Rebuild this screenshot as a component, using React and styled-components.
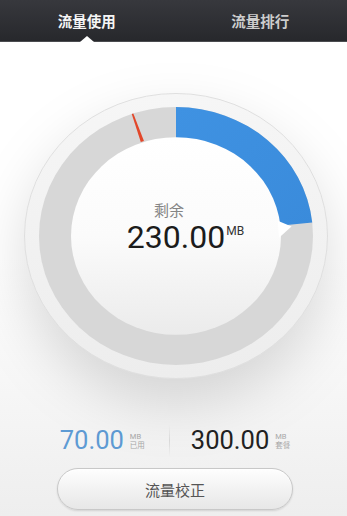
import React from "react";
import styled, { createGlobalStyle } from "styled-components";

const GlobalStyle = createGlobalStyle`
  html, body {
    margin: 0;
    padding: 0;
  }
  body {
    width: 347px;
    height: 516px;
    overflow: hidden;
    font-family: Roboto, "Noto Sans CJK SC", sans-serif;
  }
`;

const Screen = styled.div`
  width: 347px;
  height: 516px;
  display: flex;
  flex-direction: column;
  align-items: center;
  background: linear-gradient(#ffffff 0%, #ffffff 50%, #eeeeee 100%);
  overflow: hidden;
`;

const TabBar = styled.div`
  width: 100%;
  height: 42px;
  flex-shrink: 0;
  display: flex;
  box-sizing: border-box;
  background: linear-gradient(#37383d, #27282c);
  border-bottom: 1px solid #4b4c50;
`;

const Tab = styled.div`
  flex: 1;
  position: relative;
  display: flex;
  align-items: center;
  justify-content: center;
  font-family: "Noto Sans CJK SC", sans-serif;
  font-size: 14.5px;
  font-weight: 700;
  color: ${(props) => (props.$active ? "#f5f5f5" : "#cdcdcd")};

  &::after {
    content: "";
    display: ${(props) => (props.$active ? "block" : "none")};
    position: absolute;
    left: 50%;
    bottom: -1px;
    margin-left: -7px;
    width: 0;
    height: 0;
    border-left: 7px solid transparent;
    border-right: 7px solid transparent;
    border-bottom: 6px solid #ffffff;
  }
`;

const Gauge = styled.div`
  margin-top: 51px;
  margin-left: 5px;
  width: 304px;
  height: 286px;
  flex-shrink: 0;
  display: grid;

  & > * {
    grid-area: 1 / 1;
  }
`;

const Dial = styled.svg`
  width: 304px;
  height: 286px;
  filter: drop-shadow(0 24px 28px rgba(0, 0, 0, 0.14));
`;

const Readout = styled.div`
  position: relative;
  z-index: 1;
  display: flex;
  flex-direction: column;
  align-items: center;
  padding-top: 108px;
`;

const Caption = styled.div`
  margin-left: -14px;
  font-family: "Noto Sans CJK SC", sans-serif;
  font-size: 15px;
  line-height: 18px;
  color: #858585;
`;

const Amount = styled.div`
  position: relative;
  margin-top: 3px;
  font-family: Roboto, sans-serif;
  font-size: 32px;
  line-height: 30px;
  color: #1c1c1c;
`;

const Unit = styled.span`
  position: absolute;
  left: 100%;
  top: 3px;
  margin-left: 1px;
  font-size: 12px;
  line-height: 12px;
  color: #333333;
`;

const Stats = styled.div`
  margin-top: 44px;
  margin-left: 3px;
  height: 36px;
  flex-shrink: 0;
  display: flex;
  align-items: center;
`;

const Stat = styled.div`
  display: flex;
  align-items: center;
  gap: 6px;
`;

const StatValue = styled.span`
  font-family: Roboto, sans-serif;
  font-size: 25.5px;
  line-height: 1;
  color: ${(props) => props.$tone};
`;

const StatLabel = styled.span`
  display: flex;
  flex-direction: column;
  font-family: Roboto, "Noto Sans CJK SC", sans-serif;
  font-size: 7.5px;
  line-height: 9px;
  color: #a8a8a8;
`;

const Divider = styled.div`
  width: 1px;
  height: 32px;
  margin: 0 21px 0 24px;
  background: linear-gradient(rgba(220, 220, 220, 0), #dadada, rgba(220, 220, 220, 0));
`;

const Calibrate = styled.button`
  margin-top: 9px;
  margin-left: 3px;
  width: 236px;
  height: 42px;
  flex-shrink: 0;
  border-radius: 21px;
  border: 1px solid #c8c8c8;
  background: linear-gradient(#fefefe, #e7e7e7);
  box-shadow: 0 1px 2px rgba(0, 0, 0, 0.12), inset 0 1px 0 #ffffff;
  font-family: "Noto Sans CJK SC", sans-serif;
  font-size: 15px;
  color: #555555;
  padding: 0;
`;

const C = 152;
const RIM = 151.5;
const TRACK = 137;
const FACE = 105;

const pt = (deg, r) => {
  const a = (deg * Math.PI) / 180;
  return `${(C + r * Math.sin(a)).toFixed(2)} ${(C - r * Math.cos(a)).toFixed(2)}`;
};

const sector = (from, to, ro, ri) => {
  const big = to - from > 180 ? 1 : 0;
  return `M ${pt(from, ro)} A ${ro} ${ro} 0 ${big} 1 ${pt(to, ro)} L ${pt(to, ri)} A ${ri} ${ri} 0 ${big} 0 ${pt(from, ri)} Z`;
};

const used = 70;
const total = 300;
const sweep = (used / total) * 360;
const needle = -18.5;

const UsageDial = () => (
  <Dial viewBox="0 0 304 304" preserveAspectRatio="none">
    <defs>
      <linearGradient id="rim" x1="0" y1="0" x2="0" y2="1">
        <stop offset="0" stopColor="#f6f6f6" />
        <stop offset="1" stopColor="#ededed" />
      </linearGradient>
      <linearGradient id="face" x1="0" y1="0" x2="0" y2="1">
        <stop offset="0" stopColor="#ffffff" />
        <stop offset="0.5" stopColor="#fbfbfb" />
        <stop offset="1" stopColor="#ebebeb" />
      </linearGradient>
      <linearGradient id="used" x1="0" y1="0" x2="1" y2="1">
        <stop offset="0" stopColor="#3f92e2" />
        <stop offset="1" stopColor="#3a8bdb" />
      </linearGradient>
    </defs>
    <circle cx={C} cy={C} r={RIM} fill="url(#rim)" stroke="#dedede" strokeWidth="1" />
    <circle cx={C} cy={C} r={TRACK} fill="#d7d7d7" />
    <path d={sector(0, sweep, TRACK, FACE - 1)} fill="url(#used)" />
    <circle cx={C} cy={C} r={FACE} fill="url(#face)" />
    <polygon
      points={`${pt(sweep - 3, FACE - 2)} ${pt(sweep + 7, FACE - 2)} ${pt(sweep + 1, FACE + 11)}`}
      fill="#ffffff"
    />
    <polygon
      points={`${pt(needle - 0.9, FACE + 1)} ${pt(needle + 0.9, FACE + 1)} ${pt(needle + 0.35, TRACK)} ${pt(needle - 0.35, TRACK)}`}
      fill="#e2472a"
    />
  </Dial>
);

const App = () => (
  <Screen>
    <GlobalStyle />
    <TabBar>
      <Tab $active>流量使用</Tab>
      <Tab>流量排行</Tab>
    </TabBar>
    <Gauge>
      <UsageDial />
      <Readout>
        <Caption>剩余</Caption>
        <Amount>
          230.00<Unit>MB</Unit>
        </Amount>
      </Readout>
    </Gauge>
    <Stats>
      <Stat>
        <StatValue $tone="#5e9bd4">70.00</StatValue>
        <StatLabel>
          <span>MB</span>
          <span>已用</span>
        </StatLabel>
      </Stat>
      <Divider />
      <Stat>
        <StatValue $tone="#222222">300.00</StatValue>
        <StatLabel>
          <span>MB</span>
          <span>套餐</span>
        </StatLabel>
      </Stat>
    </Stats>
    <Calibrate>流量校正</Calibrate>
  </Screen>
);

export default App;
